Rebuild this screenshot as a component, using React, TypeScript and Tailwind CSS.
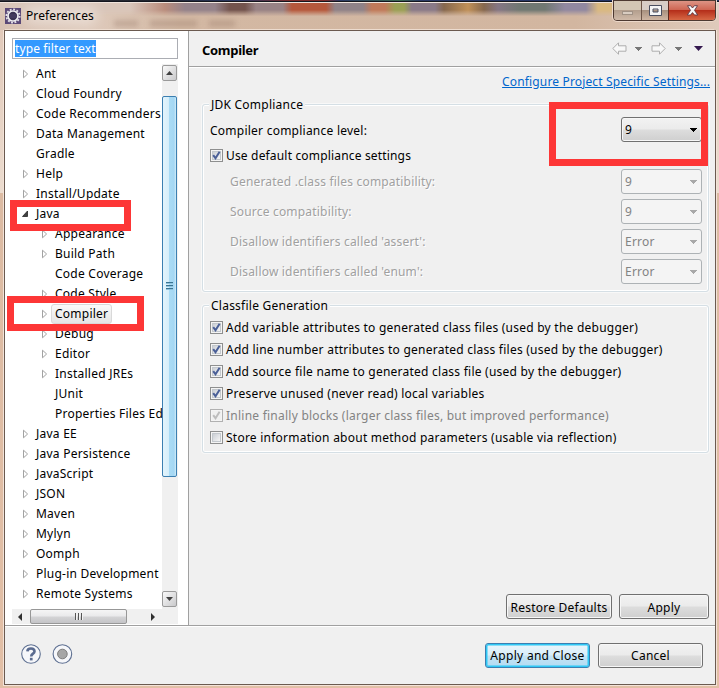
import React from "react";

type Node = { label: string; level: 0 | 1; arrow: "closed" | "open" | "none"; selected?: boolean };

const NODES: Node[] = [
  { label: "Ant", level: 0, arrow: "closed" },
  { label: "Cloud Foundry", level: 0, arrow: "closed" },
  { label: "Code Recommenders", level: 0, arrow: "closed" },
  { label: "Data Management", level: 0, arrow: "closed" },
  { label: "Gradle", level: 0, arrow: "none" },
  { label: "Help", level: 0, arrow: "closed" },
  { label: "Install/Update", level: 0, arrow: "closed" },
  { label: "Java", level: 0, arrow: "open" },
  { label: "Appearance", level: 1, arrow: "closed" },
  { label: "Build Path", level: 1, arrow: "closed" },
  { label: "Code Coverage", level: 1, arrow: "none" },
  { label: "Code Style", level: 1, arrow: "closed" },
  { label: "Compiler", level: 1, arrow: "closed", selected: true },
  { label: "Debug", level: 1, arrow: "closed" },
  { label: "Editor", level: 1, arrow: "closed" },
  { label: "Installed JREs", level: 1, arrow: "closed" },
  { label: "JUnit", level: 1, arrow: "none" },
  { label: "Properties Files Ed", level: 1, arrow: "none" },
  { label: "Java EE", level: 0, arrow: "closed" },
  { label: "Java Persistence", level: 0, arrow: "closed" },
  { label: "JavaScript", level: 0, arrow: "closed" },
  { label: "JSON", level: 0, arrow: "closed" },
  { label: "Maven", level: 0, arrow: "closed" },
  { label: "Mylyn", level: 0, arrow: "closed" },
  { label: "Oomph", level: 0, arrow: "closed" },
  { label: "Plug-in Development", level: 0, arrow: "closed" },
  { label: "Remote Systems", level: 0, arrow: "closed" },
];

function Twisty({ kind }: { kind: Node["arrow"] }) {
  return (
    <svg width="9" height="10" viewBox="0 0 9 10" className="shrink-0">
      {kind === "closed" && <path d="M1.5 1.2 L5.6 5 L1.5 8.8 Z" fill="#fff" stroke="#a2a2a2" />}
      {kind === "open" && <path d="M5.5 2 L5.5 7.5 L0.5 7.5 Z" fill="#404040" stroke="#262626" strokeWidth="0.8" />}
    </svg>
  );
}

function TreeRow({ node }: { node: Node }) {
  return (
    <div className={`flex h-5 shrink-0 items-center ${node.level ? "pl-[29px]" : "pl-[10px]"}`}>
      <Twisty kind={node.arrow} />
      <span
        className={`ml-[1px] flex h-5 items-center rounded-[3px] border px-[3px] whitespace-nowrap ${
          node.selected ? "border-[#d9d9d9] bg-linear-to-b from-[#fafafa] to-[#e5e5e5]" : "border-transparent"
        }`}
      >
        {node.label}
      </span>
    </div>
  );
}

function Check({ state = "on" }: { state?: "on" | "off" | "disabled" }) {
  const dim = state === "disabled";
  return (
    <span className={`mb-px flex size-[13px] shrink-0 border bg-[#f4f4f4] p-[1px] ${dim ? "border-[#b1b1b1]" : "border-[#8e8f8f]"}`}>
      <span
        className={`flex size-[9px] items-center justify-center ${
          dim ? "bg-[#f0f0f0]" : "border border-[#c3c8cd] bg-linear-to-br from-[#cbcfd5] to-[#f6f6f6]"
        }`}
      >
        {state !== "off" && (
          <svg width="9" height="9" viewBox="0 0 9 9" className="shrink-0">
            <path d="M1.2 4.2 L3.5 7.2 L7.6 0.8" fill="none" stroke={dim ? "#bdbdbd" : "#4a5f97"} strokeWidth="2" />
          </svg>
        )}
      </span>
    </span>
  );
}

function Caret({ fill }: { fill: string }) {
  return (
    <svg width="7" height="4" viewBox="0 0 7 4" shapeRendering="crispEdges" className="shrink-0">
      <path d="M0 0 H7 L3.5 4 Z" fill={fill} />
    </svg>
  );
}

function Combo({ value, disabled }: { value: string; disabled?: boolean }) {
  return (
    <div
      className={`mb-[2px] flex h-[25px] w-[81px] items-center justify-between rounded-[3px] border pt-px pr-[4px] pl-[3px] ${
        disabled
          ? "border-[#adb2b5] bg-[#f4f4f4] text-[#838383]"
          : "border-[#707070] bg-[linear-gradient(#f2f2f2_0%,#ebebeb_48%,#dddddd_52%,#cfcfcf_100%)] shadow-[inset_0_0_0_1px_#f7f7f7]"
      }`}
    >
      <span>{value}</span>
      <Caret fill={disabled ? "#a8a8a8" : "#000"} />
    </div>
  );
}

function Button({ children, className, primary }: { children: string; className: string; primary?: boolean }) {
  return (
    <button
      className={`flex h-[25px] items-center justify-center rounded-[3px] border pt-[2px] whitespace-nowrap ${
        primary
          ? "border-[#3c7fb1] bg-[linear-gradient(#eaf5fb_0%,#d9eefa_48%,#c4e3f4_52%,#b2dcf3_100%)] shadow-[inset_0_0_0_1.5px_#2fc8f5]"
          : "border-[#707070] bg-[linear-gradient(#f2f2f2_0%,#ebebeb_48%,#dddddd_52%,#cfcfcf_100%)] shadow-[inset_0_0_0_1px_#f7f7f7]"
      } ${className}`}
    >
      {children}
    </button>
  );
}

function Group({ title, className, children }: { title: string; className: string; children: React.ReactNode }) {
  return (
    <fieldset
      className={`relative w-[507px] rounded-[3px] border border-[#d5dfe5] shadow-[inset_0_0_0_1px_#fff,0_0_0_1px_#f8f8f8] ${className}`}
    >
      <div className="absolute -top-[9px] left-[6px] h-[18px] bg-[#f0f0f0] px-[2px] leading-[18px]">{title}</div>
      {children}
    </fieldset>
  );
}

function CheckRow({ label, state }: { label: string; state?: "on" | "off" | "disabled" }) {
  return (
    <label className={`flex h-[22px] items-center gap-[3px] whitespace-nowrap ${state === "disabled" ? "text-[#838383]" : ""}`}>
      <Check state={state} />
      <span>{label}</span>
    </label>
  );
}

function ComboRow({ label, value }: { label: string; value: string }) {
  return (
    <div className="flex h-[30px] items-center justify-between pl-[20px]">
      <span className="tracking-[0.19px] text-[#a0a0a0] [text-shadow:1px_1px_0_#fff]">{label}</span>
      <Combo value={value} disabled />
    </div>
  );
}

function TitleBar() {
  return (
    <div className="relative flex h-[30px] shrink-0 items-start overflow-hidden bg-[linear-gradient(90deg,#d8c2b4_0%,#dfcbbd_12%,#d3b8a3_25%,#d2b6a0_80%,#dfcabb_100%)]">
      <div className="absolute inset-x-0 top-0 h-[18px] bg-[linear-gradient(90deg,#d9c6ba_0px,#d9c6ba_130px,#b98c7c_165px,#94828a_185px,#94828a_215px,#73544e_230px,#73544e_245px,#988285_256px,#988285_283px,#b5583c_292px,#b5583c_326px,#8f8288_335px,#8f8288_363px,#c07a5a_372px,#c07a5a_385px,#9aa055_395px,#9aa055_404px,#8a7a88_412px,#8a7a88_435px,#86684e_444px,#c09058_468px,#86684e_484px,#857684_498px,#707872_520px,#707872_545px,#9188a0_565px,#9188a0_586px,#d9b880_598px,#d9b880_625px,#dccabd_660px,#e0d0c6_719px)] [mask-image:linear-gradient(#000_55%,transparent_90%)]" />
      <div className="absolute top-[6px] left-[24px] h-[18px] w-[74px] rounded-full bg-white/35 blur-[6px]" />
      <div className="absolute inset-x-0 top-0 h-[2px] bg-[linear-gradient(90deg,#34343c_0px,#20242e_160px,#2b3a66_240px,#7c2c2c_290px,#7c2c2c_325px,#2b3a66_340px,#3a6a50_400px,#2b3a66_420px,#1f3366_719px)]" />
      <div className="absolute inset-x-0 top-[1px] h-px bg-[#14161e]" />
      <div className="absolute inset-x-0 top-[2px] h-px bg-[#f0e4dc]" />
      <div className="absolute top-[20px] left-[114px] flex gap-[12px] blur-[2.5px]">
        <span className="h-[7px] w-[24px] bg-[#8d7061]/30" />
        <span className="h-[7px] w-[47px] bg-[#8d7061]/30" />
        <span className="h-[7px] w-[26px] bg-[#8d7061]/30" />
      </div>
      <div className="absolute inset-x-[5px] bottom-0 h-px bg-[#eddccf]" />
      <div className="relative flex items-center gap-[5px] pt-[8px] pl-[5px]">
        <svg width="16" height="16" viewBox="0 0 16 16">
          <rect width="16" height="16" fill="#5a4877" />
          <circle cx="8" cy="8" r="6.6" fill="none" stroke="#e4e2e8" strokeWidth="1.8" strokeDasharray="1.9 1.55" />
          <circle cx="8" cy="8" r="5" fill="#3a3352" stroke="#eeedf0" strokeWidth="1.7" />
          <path d="M4.2 7H11.8M4.2 9H11.8" stroke="#544a70" strokeWidth=".8" />
        </svg>
        <span className="leading-4 tracking-[0.1px]">Preferences</span>
      </div>
      <div className="relative mr-[3px] ml-auto flex h-[21px] overflow-hidden rounded-b-[4px] border border-[#4d3931] shadow-[0_0_0_1px_#ecd8ca]">
        <div className="flex w-[28px] items-center justify-center border-r border-[#6d5548] bg-[linear-gradient(#d3c6b4_45%,#b49f8e_50%,#cfb9a8)]">
          <span className="mt-[5px] h-[4px] w-[11px] border border-[#a09185] bg-[#d9ccc1]" />
        </div>
        <div className="flex w-[27px] items-center justify-center border-r border-[#5c2a20] bg-[linear-gradient(#d8cdc6_45%,#a8917f_50%,#cfb6a3)]">
          <svg width="13" height="11" viewBox="0 0 13 11">
            <path fillRule="evenodd" d="M.5 .5H12.5V10.5H.5ZM4 4V7H9V4Z" fill="#f5f5f5" stroke="#4b4f60" />
          </svg>
        </div>
        <div className="flex w-[46px] items-center justify-center bg-[linear-gradient(#dd9485_0%,#cf6754_45%,#b52f1b_50%,#d76845_100%)]">
          <svg width="13" height="11" viewBox="0 0 13 11">
            <path d="M1.5 .7H4.6L6.5 3L8.4 .7H11.5L8.5 5.3L11.7 10H8.5L6.5 7.6L4.5 10H1.3L4.5 5.3Z" fill="#f8f8f8" stroke="#5b3945" strokeWidth=".9" />
          </svg>
        </div>
      </div>
    </div>
  );
}

function ScrollButton({ down }: { down?: boolean }) {
  return (
    <div className="flex h-[16px] w-[15px] shrink-0 items-center justify-center rounded-[2px] border border-[#9a9a9a] bg-linear-to-br from-[#fafafa] to-[#c9c9cb]">
      <svg width="7" height="4" viewBox="0 0 7 4">
        <path d={down ? "M0 0H7L3.5 4Z" : "M0 4H7L3.5 0Z"} fill="#404040" />
      </svg>
    </div>
  );
}

function LeftPane() {
  return (
    <div className="flex w-[184px] shrink-0 flex-col border-r border-[#a0a0a0] bg-white pt-[7px] pl-[7px]">
      <div className="flex h-[21px] w-[166px] shrink-0 items-center border border-[#abadb3] pl-[2px]">
        <span className="h-[17px] bg-[#3399ff] leading-[18px] tracking-[0.12px] text-white">type filter text</span>
      </div>
      <div className="mt-[5px] flex h-[545px] shrink-0">
        <div className="flex h-[541px] w-[150px] flex-col overflow-hidden">
          {NODES.map((n) => (
            <TreeRow key={n.label} node={n} />
          ))}
        </div>
        <div className="flex w-[16px] flex-col bg-[#f0f0f0] pt-px">
          <ScrollButton />
          <div className="mt-[15px] flex h-[381px] w-[15px] items-center justify-center rounded-[2px] border border-[#3c7fb1] bg-[linear-gradient(90deg,#e3f4fc_0%,#d6eefa_45%,#a9dbf5_50%,#a5d7f3_85%,#d0ecf9_100%)]">
            <div className="mb-[2px] flex flex-col gap-[1px]">
              <span className="h-[2px] w-[7px] border-b border-[#8fc3df] bg-[#3a7492]" />
              <span className="h-[2px] w-[7px] border-b border-[#8fc3df] bg-[#3a7492]" />
              <span className="h-[2px] w-[7px] border-b border-[#8fc3df] bg-[#3a7492]" />
            </div>
          </div>
          <div className="mt-auto mb-[2px]">
            <ScrollButton down />
          </div>
        </div>
      </div>
      <div className="flex h-[15px] w-[166px] items-center bg-[#f0f0f0]">
        <svg width="18" height="8" viewBox="0 0 18 8">
          <path d="M10 0V8L6 4Z" fill="#303030" />
        </svg>
        <div className="flex h-[15px] w-[97px] items-center justify-center gap-[1px] rounded-[2px] border border-[#979797] bg-[linear-gradient(#f5f5f5_0%,#e9e9eb_48%,#d4d4d6_52%,#c4c4c7_100%)]">
          <span className="h-[7px] w-[2px] border-r border-[#f2f2f2] bg-[#555]" />
          <span className="h-[7px] w-[2px] border-r border-[#f2f2f2] bg-[#555]" />
          <span className="h-[7px] w-[2px] border-r border-[#f2f2f2] bg-[#555]" />
        </div>
        <svg width="34" height="8" viewBox="0 0 34 8">
          <path d="M24 0V8L28 4Z" fill="#303030" />
        </svg>
      </div>
    </div>
  );
}

function RightPane() {
  return (
    <div className="flex min-w-0 flex-1 flex-col">
      <div className="flex h-[36px] shrink-0 items-center border-b border-[#a0a0a0] pr-[12px] pl-[13px] shadow-[0_1px_0_#fff]">
        <h1 className="mt-[4px] text-[13px] font-bold tracking-[-0.3px]">Compiler</h1>
        <div className="ml-auto flex items-center">
          <svg width="15" height="13" viewBox="0 0 15 13" className="mr-[8px]">
            <path d="M.8 6.5L6.5 .8V3.8H14V9.2H6.5V12.2Z" fill="#f8f8f8" stroke="#adadad" />
          </svg>
          <Caret fill="#777" />
          <svg width="15" height="13" viewBox="0 0 15 13" className="mr-[9px] ml-[9px]">
            <path d="M14.2 6.5L8.5 .8V3.8H1V9.2H8.5V12.2Z" fill="#f8f8f8" stroke="#adadad" />
          </svg>
          <Caret fill="#777" />
          <svg width="9" height="5" viewBox="0 0 9 5" className="ml-[12px]">
            <path d="M0 0H9L4.5 5Z" fill="#34184e" />
          </svg>
        </div>
      </div>
      <div className="flex flex-1 flex-col pr-[6px] pl-[13px]">
        <div className="-mr-px mt-[6px] flex h-[18px] justify-end leading-[18px] tracking-[0.15px]">
          <a className="text-[#0066cc] underline">Configure Project Specific Settings...</a>
        </div>
        <Group title="JDK Compliance" className="mt-[13px] h-[188px] pt-[13px] pr-[6px] pl-[7px]">
          <div className="flex h-[25px] items-center justify-between">
            <span>Compiler compliance level:</span>
            <Combo value="9" />
          </div>
          <div className="mt-[2px] tracking-[0.17px]">
            <CheckRow label="Use default compliance settings" />
          </div>
          <ComboRow label="Generated .class files compatibility:" value="9" />
          <ComboRow label="Source compatibility:" value="9" />
          <ComboRow label="Disallow identifiers called 'assert':" value="Error" />
          <ComboRow label="Disallow identifiers called 'enum':" value="Error" />
        </Group>
        <Group title="Classfile Generation" className="mt-[13px] h-[148px] pt-[11px] pl-[7px]">
          <CheckRow label="Add variable attributes to generated class files (used by the debugger)" />
          <CheckRow label="Add line number attributes to generated class files (used by the debugger)" />
          <CheckRow label="Add source file name to generated class file (used by the debugger)" />
          <CheckRow label="Preserve unused (never read) local variables" />
          <CheckRow label="Inline finally blocks (larger class files, but improved performance)" state="disabled" />
          <CheckRow label="Store information about method parameters (usable via reflection)" state="off" />
        </Group>
        <div className="mt-auto mb-[6px] flex justify-end gap-[7px]">
          <Button className="w-[106px]">Restore Defaults</Button>
          <Button className="w-[90px]">Apply</Button>
        </div>
      </div>
    </div>
  );
}

function Footer() {
  return (
    <div className="flex h-[59px] shrink-0 items-center border-t border-[#a0a0a0] pr-[12px] pl-[16px] shadow-[inset_0_1px_0_#fff]">
      <svg width="20" height="20" viewBox="0 0 20 20" className="mr-[11px] mb-[2px]">
        <circle cx="10" cy="10" r="9.3" fill="#f6f7fa" stroke="#5d6f91" strokeWidth="1.1" />
        <path d="M6.4 7.4C6.6 3.4 13.6 3.7 13.5 7.5C13.4 9.8 10.2 9.6 10.2 12.6" fill="none" stroke="#5a6b90" strokeWidth="2.6" />
        <rect x="8.9" y="13.8" width="2.7" height="2.6" fill="#5a6b90" />
      </svg>
      <svg width="21" height="20" viewBox="0 0 21 20" className="mb-[2px]">
        <circle cx="10.4" cy="10" r="9.3" fill="#f6f7fa" stroke="#5d6f91" strokeWidth="1.1" />
        <circle cx="10.4" cy="10" r="4.8" fill="#a6a6a6" stroke="#7d7d7d" />
      </svg>
      <Button primary className="ml-auto w-[105px] tracking-[0.3px]">Apply and Close</Button>
      <Button className="ml-[8px] w-[105px]">Cancel</Button>
    </div>
  );
}

export default function App() {
  return (
    <div className="relative flex h-[688px] w-[719px] flex-col overflow-hidden bg-[linear-gradient(#dfc6b6_0px,#ecdccf_193px,#dcbba3_193px,#e2bfa6_688px)] font-['Noto_Sans','Open_Sans',sans-serif] text-[12px] tracking-[0.24px] text-black">
      <TitleBar />
      <div className="mr-[3px] ml-[4px] flex h-[655px] flex-col border border-[#6b5a50] bg-[#f0f0f0] shadow-[0_0_0_1px_#f3e3d8]">
        <div className="flex h-[594px] shrink-0">
          <LeftPane />
          <RightPane />
        </div>
        <Footer />
      </div>
      <div className="absolute top-[200px] left-[10px] h-[31px] w-[121px] border-[7px] border-[#fd3636]" />
      <div className="absolute top-[296px] left-[7px] h-[35px] w-[137px] border-[7px] border-[#fd3636]" />
      <div className="absolute top-[102px] left-[549px] h-[64px] w-[159px] border-[7px] border-[#fd3636]" />
    </div>
  );
}
